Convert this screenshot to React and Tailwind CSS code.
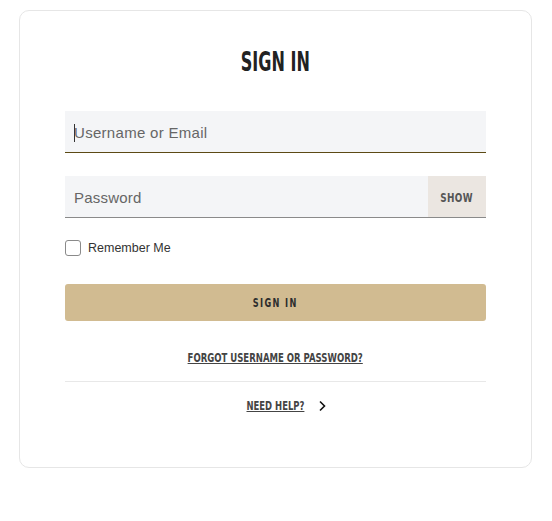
export default function App() {
  const narrow = { fontFamily: '"DejaVu Sans Condensed", "Liberation Sans Narrow", sans-serif' };
  return (
    <div className="min-h-screen bg-white pt-[10px] pl-[19px]" style={{ fontFamily: '"Liberation Sans", Arial, sans-serif' }}>
      <div className="w-[513px] rounded-[10px] border border-[#e6e6e6] px-[45px] pt-[37px] pb-[53px]">
        <h1 className="text-center text-[27px] leading-[28px] font-bold text-[#222]" style={narrow}>
          <span className="inline-block scale-x-[0.66]">SIGN IN</span>
        </h1>

        <div className="mt-[35px] h-[42px] flex items-center bg-[#f4f5f7] border-b border-[#5c4a14] pl-[9px] pt-[3px]">
          <span className="w-px h-[18px] bg-[#333] mr-[-1px]"></span>
          <span className="text-[15px] text-[#666] tracking-[0.3px]">Username or Email</span>
        </div>

        <div className="mt-[23px] h-[42px] flex bg-[#f4f5f7] border-b border-[#8a8a8a]">
          <div className="flex-1 flex items-center pl-[9px] pt-[3px] text-[15px] text-[#666] tracking-[0.2px]">Password</div>
          <div className="w-[58px] bg-[#ebe6e1] flex items-center justify-center pt-[2px] text-[13px] font-bold text-[#555] tracking-[0.5px]" style={narrow}>
            <span className="inline-block scale-x-[0.76]">SHOW</span>
          </div>
        </div>

        <div className="mt-[22px] flex items-center h-[16px]">
          <span className="w-[16px] h-[16px] rounded-[3px] border border-[#8a8a8a] bg-white"></span>
          <span className="ml-[7px] text-[12.5px] text-[#333]">Remember Me</span>
        </div>

        <button className="mt-[28px] w-full h-[37px] rounded-[3px] bg-[#d1bb91] text-[13px] font-bold text-[#2d2d2d] tracking-[2px]" style={narrow}>
          <span className="inline-block scale-x-[0.7]">SIGN IN</span>
        </button>

        <div className="mt-[29px] text-center text-[11.5px] leading-[16px] font-bold text-[#444]" style={narrow}>
          <span className="inline-block scale-x-[0.825] underline">FORGOT USERNAME OR PASSWORD?</span>
        </div>

        <div className="mt-[15px] h-px bg-[#e8e8e8]"></div>

        <div className="mt-[16px] flex justify-center">
          <div className="relative flex items-center h-[16px]">
            <span className="block scale-x-[0.817] text-[11.5px] leading-[16px] font-bold text-[#444] underline" style={narrow}>
              NEED HELP?
            </span>
            <svg className="absolute left-full top-[2px] ml-[7px]" width="9" height="12" viewBox="0 0 9 12" fill="none">
              <path d="M2 1.5L6.5 6L2 10.5" stroke="#111" strokeWidth="1.6" />
            </svg>
          </div>
        </div>
      </div>
    </div>
  );
}
